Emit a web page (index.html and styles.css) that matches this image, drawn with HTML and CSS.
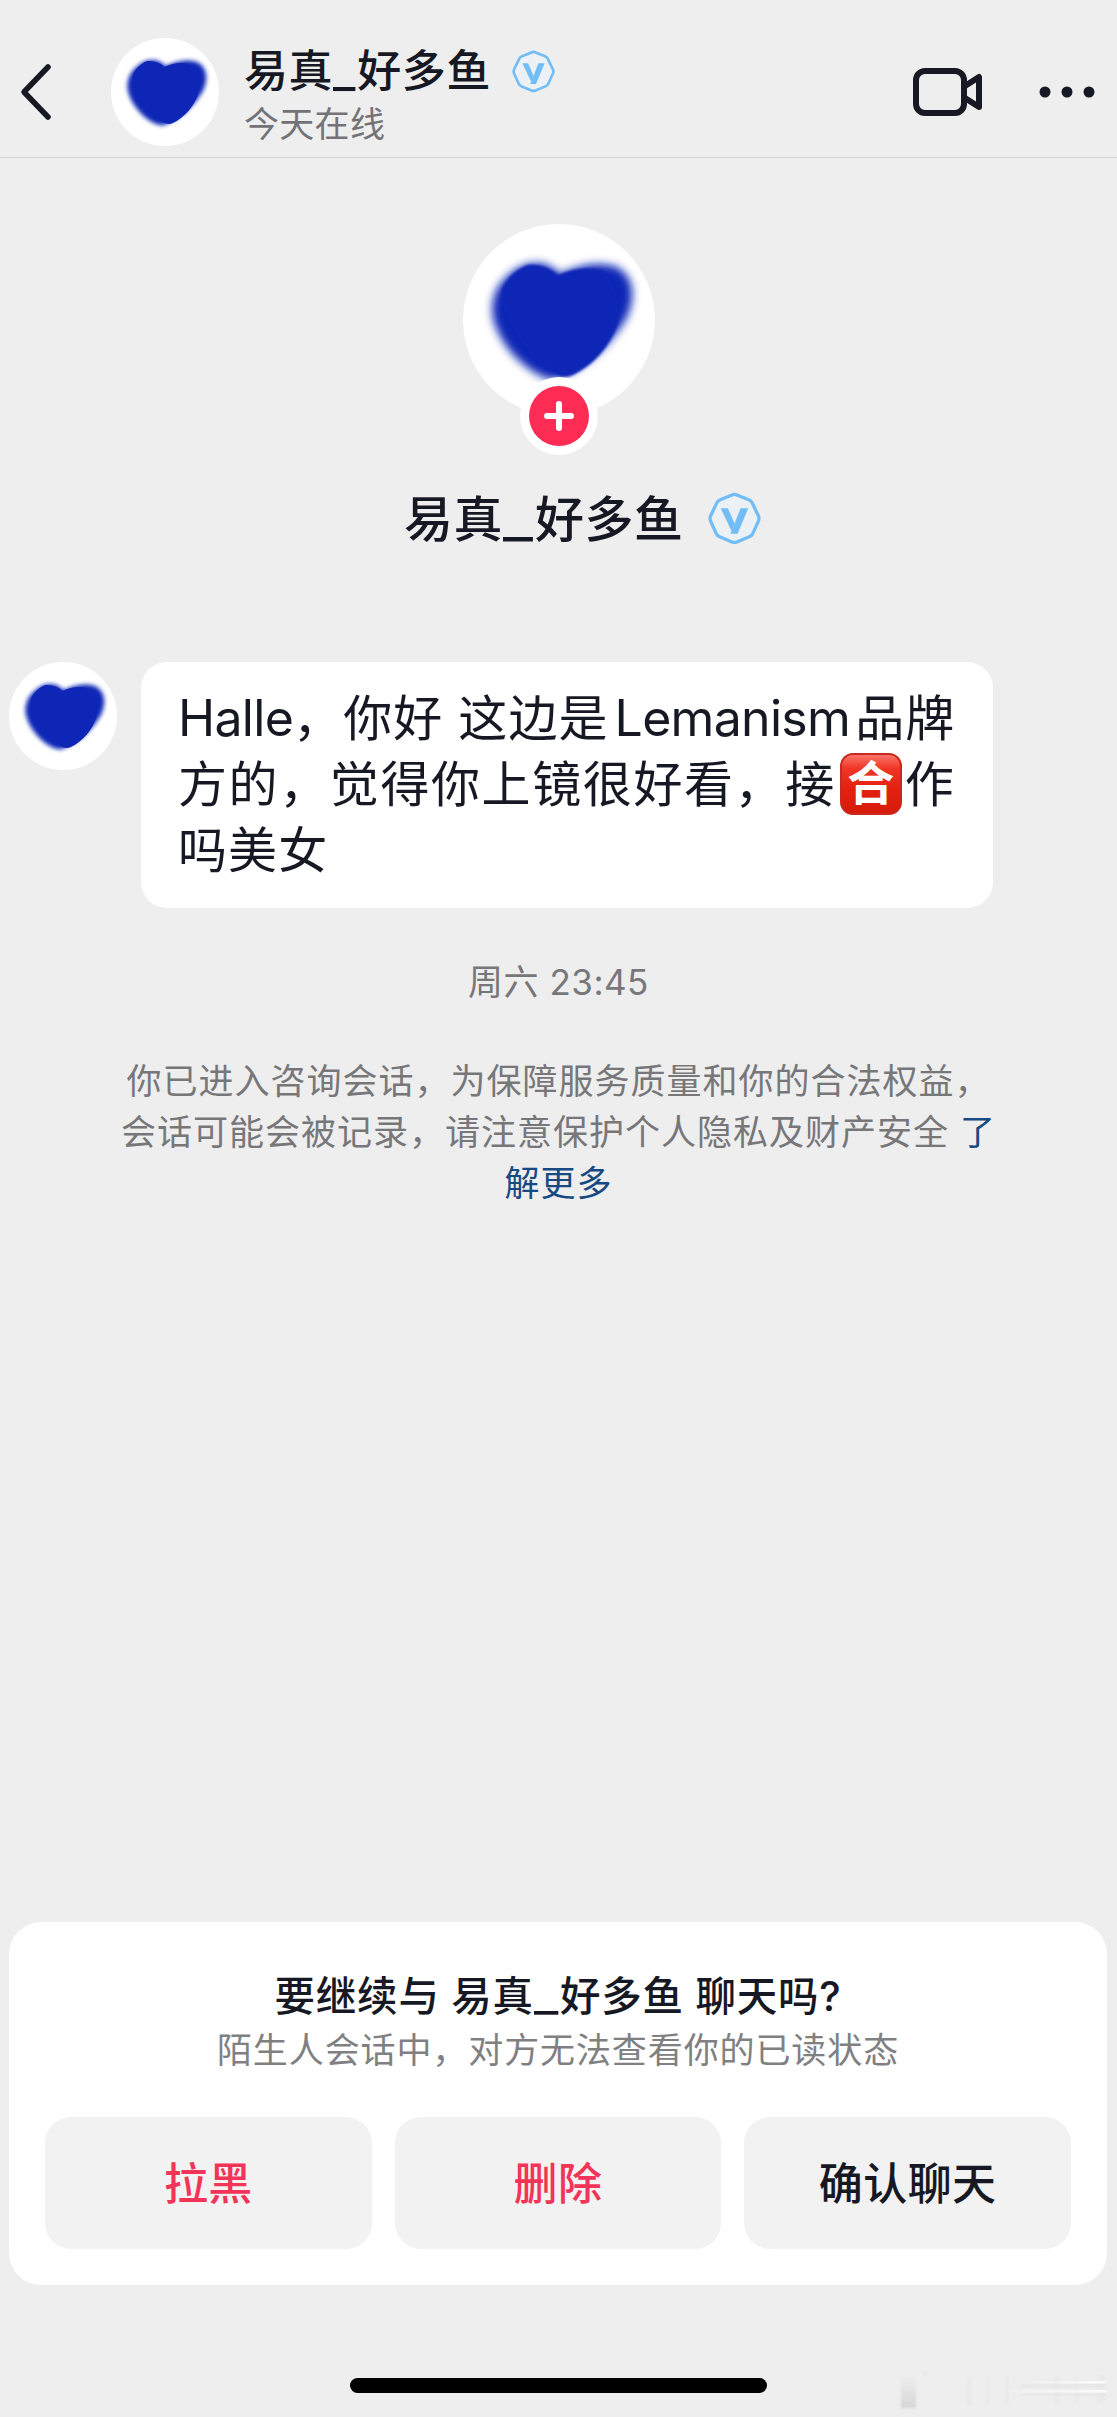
FILE: index.html
```html
<!DOCTYPE html>
<html lang="zh-CN">
<head>
<meta charset="utf-8">
<title>易真_好多鱼</title>
<link rel="stylesheet" href="styles.css">
</head>
<body>
<svg class="defs" width="0" height="0" aria-hidden="true">
  <defs>
    <filter id="soft" x="-20%" y="-20%" width="140%" height="140%"><feGaussianBlur stdDeviation="4"/></filter>
    <filter id="crisp" x="-20%" y="-20%" width="140%" height="140%"><feGaussianBlur stdDeviation="1.2"/></filter>
    <symbol id="heart" viewBox="0 0 192 192">
      <circle cx="96" cy="96" r="96" fill="#fff"/>
      <path d="M97 50C86 38 72 36 57 43C34 56 25 76 31 98C39 122 57 142 80 153Q92 158 100 152C126 142 149 118 163 95C173 75 172 53 154 43C134 36 114 42 97 50Z" fill="#0e28b6" filter="url(#soft)"/>
      <path d="M95 51C87 44 76 40 65 41C55 44 43 54 39 66C37 82 48 104 61 121C71 135 84 147 97 152Q104 154 110 151C131 141 148 121 155 99C157 81 153 59 139 47C125 42 110 45 95 51Z" fill="#0e28b6" filter="url(#crisp)"/>
    </symbol>
    <symbol id="verified" viewBox="0 0 52 52">
      <path d="M23.500 3Q26 1.500 28.500 3L40 7.500Q42.500 8.500 43.500 11L49.500 23.500Q50.500 26 49.500 28.500L44 40.500Q43 43 40.500 44L28.500 49Q26 50 23.500 49L11.500 44Q9 43 8 40.500L2.500 28.500Q1.500 26 2.500 23.500L8.500 11Q9.500 8.500 12 7.500Z" fill="#ebf1f5" stroke="#72bdf6" stroke-width="3.200"/>
      <path d="M12.500 16H19.500L26 31L23.500 38Q22.500 37 22 36Z" fill="#72bdf6"/>
      <path d="M32 16H39.500L29 41H22Z" fill="#72bdf6"/>
    </symbol>
  </defs>
</svg>
<div class="screen">
  <header class="topbar">
    <svg class="back" viewBox="0 0 34 60"><path d="M29 5L5 30L29 55"/></svg>
    <svg class="avatar"><use href="#heart"/></svg>
    <div class="who">
      <div class="who-line"><h1 class="who-name">易真<span class="underscore">_</span>好多鱼</h1><svg class="badge"><use href="#verified"/></svg></div>
      <p class="status">今天在线</p>
    </div>
    <svg class="video" viewBox="0 0 70 50"><rect x="3" y="4" width="48" height="42" rx="9"/><path d="M52 19L66 10V40L52 31"/></svg>
    <svg class="more" viewBox="0 0 56 12"><circle cx="6" cy="6" r="5.500"/><circle cx="28" cy="6" r="5.500"/><circle cx="50" cy="6" r="5.500"/></svg>
  </header>
  <main class="chat">
    <section class="profile">
      <div class="portrait">
        <svg class="avatar-large"><use href="#heart"/></svg>
        <svg class="follow" viewBox="0 0 78 78"><circle cx="39" cy="39" r="39" fill="#fff"/><circle cx="39" cy="39" r="30" fill="#fe2c55"/><path d="M39 27V51M27 39H51" stroke="#fff" stroke-width="6" stroke-linecap="round"/></svg>
      </div>
      <div class="profile-line"><h2 class="profile-name">易真<span class="underscore">_</span>好多鱼</h2><svg class="badge-large"><use href="#verified"/></svg></div>
    </section>
    <section class="message">
      <svg class="avatar"><use href="#heart"/></svg>
      <p class="bubble"><span class="row row-one"><span class="latin">Halle</span>，你好 这边是<span class="latin brand">Lemanism</span>品牌</span><span class="row row-two">方的，觉得你上镜很好看，接<span class="emoji">合</span>作</span><span class="row">吗美女</span></p>
    </section>
    <time class="time">周六 23:45</time>
    <p class="notice"><span class="row">你已进入咨询会话，为保障服务质量和你的合法权益，</span><span class="row">会话可能会被记录，请注意保护个人隐私及财产安全 <a class="link">了</a></span><span class="row"><a class="link">解更多</a></span></p>
  </main>
  <section class="panel">
    <h2 class="panel-title">要继续与 易真<span class="underscore">_</span>好多鱼 聊天吗?</h2>
    <p class="panel-note">陌生人会话中，对方无法查看你的已读状态</p>
    <div class="actions">
      <button class="action danger">拉黑</button>
      <button class="action danger">删除</button>
      <button class="action">确认聊天</button>
    </div>
  </section>
  <footer class="home">
    <div class="home-bar"></div>
    <svg class="smudge" viewBox="0 0 220 44">
      <defs>
        <linearGradient id="fall" x2="0" y2="1"><stop offset="0" stop-color="#d8d8d8" stop-opacity="0"/><stop offset="1" stop-color="#d6d6d6"/></linearGradient>
        <linearGradient id="streak"><stop offset="0" stop-color="#fff" stop-opacity="0"/><stop offset="1" stop-color="#fff"/></linearGradient>
      </defs>
      <g filter="url(#crisp)">
        <rect x="10" y="8" width="15" height="33" fill="url(#fall)"/>
        <rect x="31" y="4" width="5" height="5" fill="#e8e8e8"/>
        <path d="M75 10H81V39H75ZM95 10H98V39H95ZM114 8H118V39H114ZM163 8H168V39H163ZM184 8H187V36H184ZM206 8H214V34L206 38Z" fill="#eaeaea"/>
      </g>
      <path d="M130 17H214V21H130ZM130 26H214V29H130Z" fill="#e4e4e4" opacity=".5"/>
      <rect x="130" y="14" width="85" height="2.500" fill="url(#streak)" opacity=".8"/>
      <rect x="110" y="23" width="105" height="2.500" fill="url(#streak)" opacity=".8"/>
    </svg>
  </footer>
</div>
</body>
</html>
```

FILE: styles.css
```css
* { box-sizing: border-box; }
body, h1, h2, p { margin: 0; }
body { background: #eee; color: #161823; font-family: "Inter", "Noto Sans CJK SC", sans-serif; }
svg { display: block; flex: none; }
.defs { position: absolute; }
.screen { width: 1117px; height: 2417px; display: flex; flex-direction: column; overflow: hidden; }
.row { display: block; white-space: nowrap; }
.underscore { display: inline-block; transform-origin: left; letter-spacing: 0; text-align: left; }

.topbar { height: 158px; flex: none; display: flex; align-items: flex-start; padding: 38px 22px 0 19px; border-bottom: 1px solid #d4d4d6; }
.back { width: 34px; height: 60px; margin: 24px 58px 0 0; fill: none; stroke: #161823; stroke-width: 5.500px; stroke-linecap: round; stroke-linejoin: round; }
.avatar { width: 108px; height: 108px; }
.who { margin-left: 25px; flex: 1; }
.who-line { display: flex; align-items: center; height: 66px; }
.who-name { font-size: 44px; font-weight: 500; letter-spacing: 0.6px; line-height: 66px; white-space: nowrap; }
.who-name .underscore { width: 24px; transform: scaleX(1.1); }
.badge { width: 43px; height: 43px; margin-left: 21px; }
.status { font-size: 35px; line-height: 40px; letter-spacing: 0.3px; color: #737377; }
.video { width: 70px; height: 50px; margin: 29px 56px 0 0; fill: none; stroke: #161823; stroke-width: 6px; stroke-linejoin: round; }
.more { width: 56px; height: 12px; margin-top: 48px; fill: #161823; }

.chat { flex: 1; }
.profile { padding-top: 66px; height: 504px; }
.portrait { display: flex; flex-direction: column; align-items: center; }
.avatar-large { width: 192px; height: 192px; }
.follow { width: 78px; height: 78px; margin-top: -39px; }
.profile-line { display: flex; align-items: center; height: 72px; margin: 27px 0 0 404px; }
.profile-name { padding-top: 4px; font-size: 49px; font-weight: 500; letter-spacing: 0.5px; line-height: 72px; white-space: nowrap; }
.profile-name .underscore { width: 32px; transform: scaleX(1.32); }
.badge-large { width: 53px; height: 53px; margin-left: 24px; }

.message { display: flex; padding-left: 9px; gap: 24px; }
.bubble { width: 852px; height: 246px; padding: 23px 0 0 37px; border-radius: 26px; background: #fff; font-size: 49px; line-height: 66.500px; letter-spacing: 1.100px; }
.bubble .row { height: 66.500px; }
.latin { font-size: 50px; letter-spacing: -0.7px; }
.brand { margin: 0 5px 0 6px; }
.row-two { letter-spacing: 1.600px; }
.emoji { display: inline-block; width: 62px; height: 62px; margin: 0 3px 0 4px; vertical-align: 2px; border: 2px solid #c9281c; border-radius: 13px; background: linear-gradient(#fb7468, #ee3526 24%, #e3200f 60%, #d51b0b); color: #fff; font-size: 47px; font-weight: 700; line-height: 56px; text-align: center; letter-spacing: 0; }
.time { display: block; margin-top: 48px; height: 52px; line-height: 52px; text-align: center; font-size: 35px; letter-spacing: 0.5px; color: #77777a; }
.notice { margin-top: 48px; text-align: center; font-size: 35px; line-height: 51px; letter-spacing: 1px; color: #77777a; }
.link { color: #174a82; }

.panel { flex: none; height: 363px; margin: 0 10px 0 9px; padding: 47px 36px 0 36px; border-radius: 32px; background: #fff; text-align: center; }
.panel-title { font-size: 40.500px; font-weight: 500; line-height: 56px; letter-spacing: 0.8px; }
.panel-title .underscore { width: 26px; transform: scaleX(1.3); }
.panel-note { font-size: 35px; line-height: 50px; letter-spacing: 0.9px; color: #808083; }
.actions { display: grid; grid-template-columns: repeat(3, 1fr); gap: 23px; margin-top: 42px; }
.action { height: 132px; padding: 2px 0 0; border: 0; border-radius: 26px; background: #f2f2f2; color: #161823; font: 500 44px/130px "Inter", "Noto Sans CJK SC", sans-serif; letter-spacing: 0.4px; }
.danger { color: #f33459; }
.home { position: relative; flex: none; height: 132px; display: flex; justify-content: center; padding-top: 93px; }
.home-bar { width: 417px; height: 15px; border-radius: 8px; background: #000; }
.smudge { position: absolute; right: 6px; bottom: 6px; width: 220px; height: 44px; }
```
